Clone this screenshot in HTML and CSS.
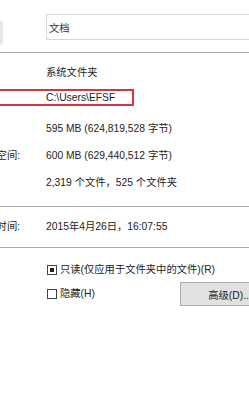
FILE: index.html
```
<!DOCTYPE html>
<html lang="zh-CN">
<head>
    <meta charset="UTF-8">
    <meta name="viewport" content="width=device-width, initial-scale=1.0">
    <title>文档 属性</title>
    <link rel="stylesheet" href="styles.css">
</head>
<body>
    <div class="page">
        <div class="dialog">
            <div class="name-row">
                <div class="folder-icon"></div>
                <input class="name-box" type="text" value="文档">
            </div>
            <hr class="sep sep-top">

            <div class="row row-type">
                <span class="label">类型:</span>
                <span class="value">系统文件夹</span>
            </div>
            <div class="row row-location marked">
                <span class="label">位置:</span>
                <span class="value">C:\Users\EFSF</span>
            </div>
            <div class="row row-size">
                <span class="label">大小:</span>
                <span class="value">595 MB (624,819,528 字节)</span>
            </div>
            <div class="row row-disk">
                <span class="label">占用空间:</span>
                <span class="value">600 MB (629,440,512 字节)</span>
            </div>
            <div class="row row-count">
                <span class="label">包含:</span>
                <span class="value">2,319 个文件，525 个文件夹</span>
            </div>
            <hr class="sep sep-mid">

            <div class="row row-created">
                <span class="label">创建时间:</span>
                <span class="value">2015年4月26日，16:07:55</span>
            </div>
            <hr class="sep sep-bottom">

            <div class="row row-readonly">
                <span class="label">属性:</span>
                <label class="check"><span class="box mixed"></span>只读(仅应用于文件夹中的文件)(R)</label>
            </div>
            <div class="row row-hidden">
                <span class="label"></span>
                <label class="check"><span class="box"></span>隐藏(H)</label>
                <button class="advanced-btn" type="button">高级(D)...</button>
            </div>
        </div>
    </div>
</body>
</html>
```

FILE: styles.css
```
/* General */
body {
    margin: 0;
    padding: 0;
    background: #fff;
    font-family: "Liberation Sans", "Noto Sans CJK SC", sans-serif;
    font-size: 10.3px;
    color: #222;
}
.page {
    width: 249px;
    height: 400px;
    overflow: hidden;
    background: #fff;
}
.dialog {
    margin-left: -24px;
    width: 360px;
}

/* Name row */
.name-row {
    display: flex;
    align-items: flex-start;
    height: 26px;
    margin-top: 14px;
}
.folder-icon {
    width: 27px;
    height: 25px;
    margin-top: 6px;
    margin-right: 43px;
    flex: none;
    border-radius: 0 4px 4px 0;
    background: linear-gradient(90deg, #f6f6f6, #e6e6e6);
}
.name-box {
    display: block;
    width: 260px;
    height: 26px;
    box-sizing: border-box;
    margin: 0;
    padding: 0 2px;
    border: 1px solid #d6d6d6;
    font-family: inherit;
    font-size: 10.3px;
    color: #333;
}

/* Separators */
.sep {
    border: none;
    border-top: 1px solid #ababab;
    margin: 0;
    width: 300px;
}
.sep-top { margin-top: 12px; }
.sep-mid { margin-top: 15px; }
.sep-bottom { margin-top: 12px; }

/* Property rows */
.row {
    display: flex;
    align-items: center;
    height: 16px;
    line-height: 16px;
    white-space: nowrap;
}
.label {
    width: 70px;
    flex: none;
}
.row-type { margin-top: 12px; }
.row-location { margin-top: 8px; }
.row-size { margin-top: 15px; }
.row-disk { margin-top: 11px; }
.row-count { margin-top: 11px; }
.row-created { margin-top: 12px; }
.row-readonly { margin-top: 14px; }
.row-hidden { margin-top: 4px; height: 24px; }

.marked {
    width: 156px;
    height: 13px;
    border: 2px solid #d4353f;
    border-left: none;
    padding: 0;
}

/* Checkboxes */
.check {
    display: flex;
    align-items: center;
    gap: 3px;
}
.row-hidden .check {
    width: 134px;
    flex: none;
}
.box {
    width: 8px;
    height: 8px;
    border: 1px solid #444;
    background: #fff;
    display: flex;
    align-items: center;
    justify-content: center;
    margin-left: 1px;
}
.box.mixed::after {
    content: "";
    width: 4px;
    height: 4px;
    background: #222;
}

/* Button */
.advanced-btn {
    flex: none;
    width: 100px;
    height: 24px;
    border: 1px solid #adadad;
    background: #e1e1e1;
    font-family: inherit;
    font-size: 10.3px;
    color: #222;
    padding: 0;
}
```
